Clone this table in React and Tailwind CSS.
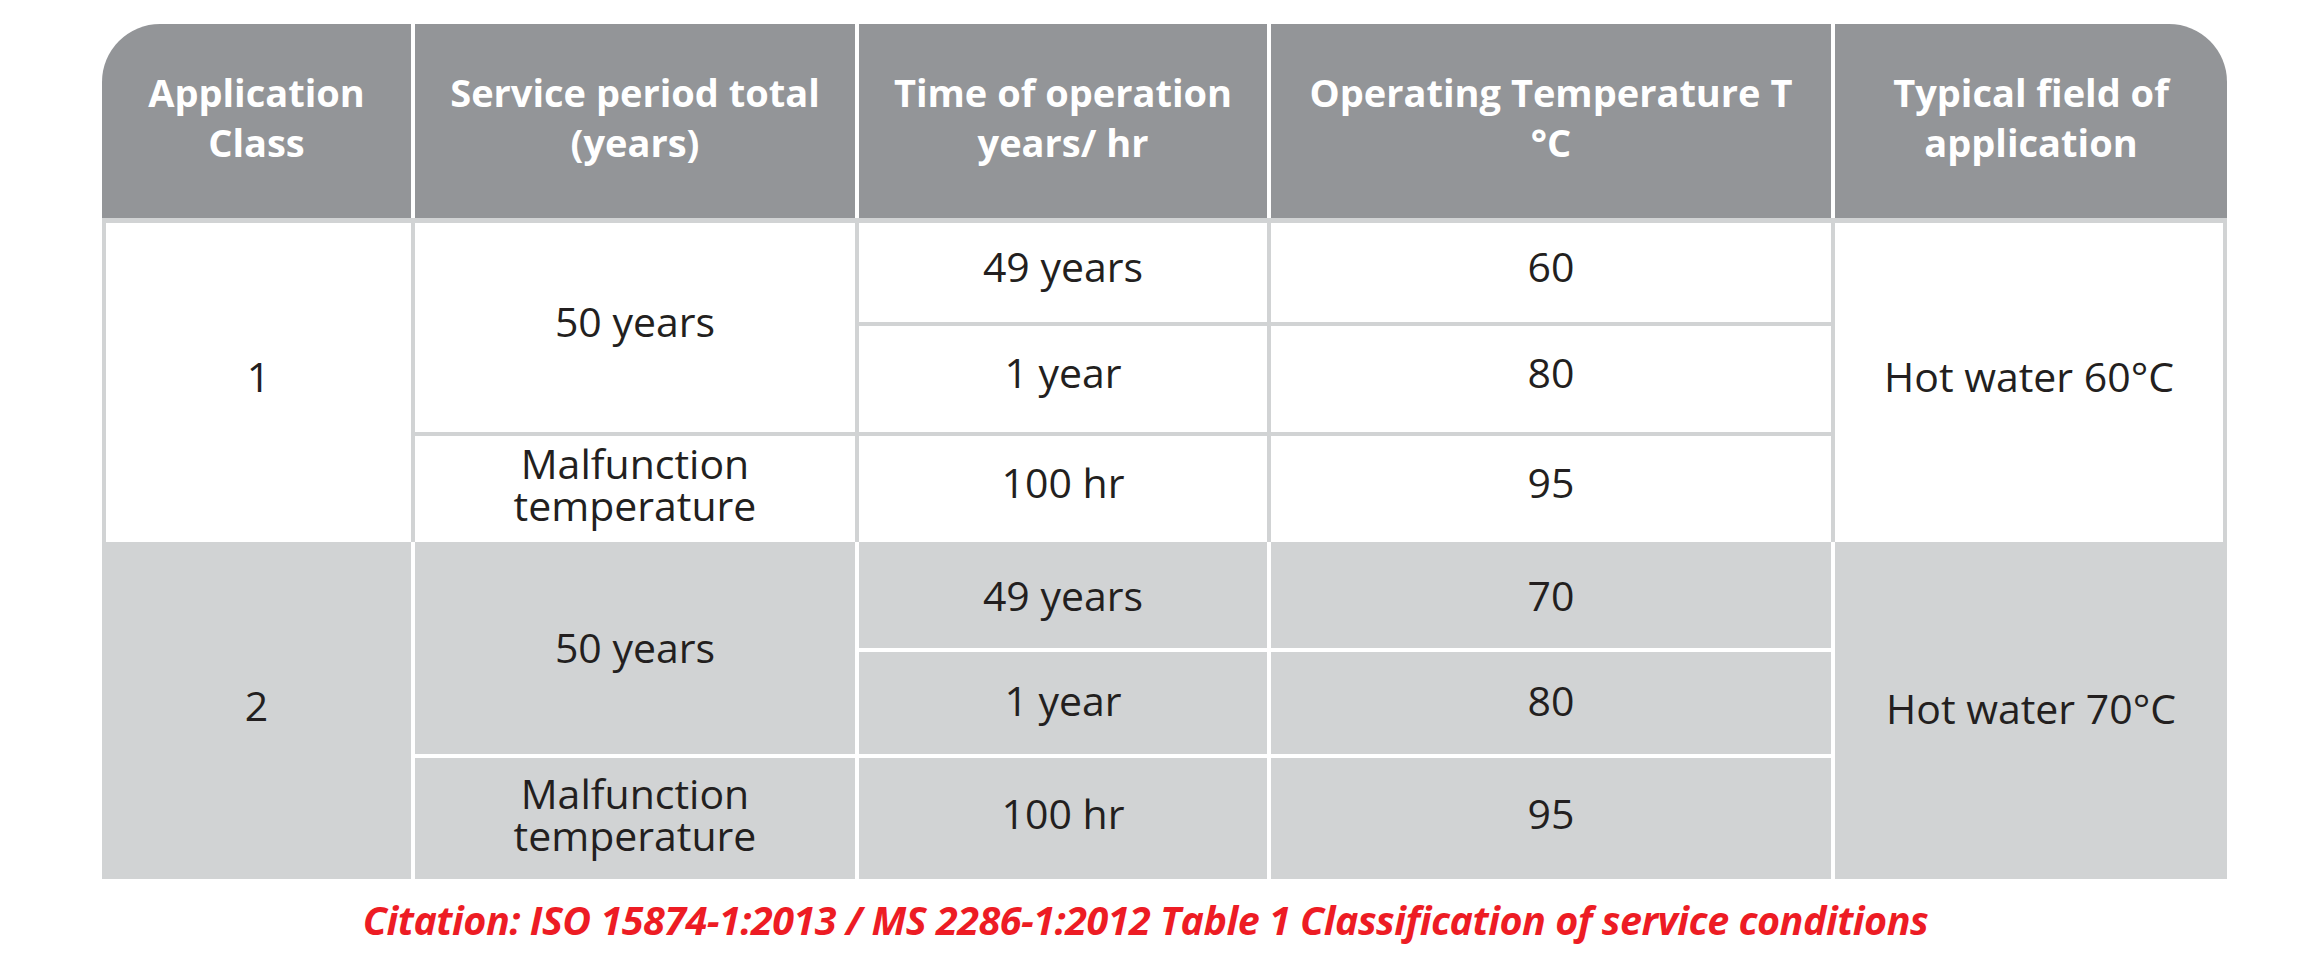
import React from "react";

const F = "font-['Open_Sans','Noto_Sans',sans-serif]";

function H({ children, className = "" }) {
  return (
    <div className={`flex items-center justify-center bg-[#939598] text-white font-bold text-[38px] leading-[50px] text-center pb-[8px] ${className}`}>
      <div>{children}</div>
    </div>
  );
}

function C({ children, className = "", bg, pb = "pb-[14px]" }) {
  return (
    <div className={`flex items-center justify-center text-center text-[#231f20] text-[41px] leading-[42px] ${pb} ${bg} ${className}`}>
      <div>{children}</div>
    </div>
  );
}

function Group({ cls, rows, data, cellBg, lineBg, pad, p }) {
  return (
    <div className={`grid ${cls} ${rows} gap-x-[4px] gap-y-[4px] ${lineBg} ${pad}`}>
      <C bg={cellBg} pb={p.cls} className="row-span-3">{data.cls}</C>
      <C bg={cellBg} pb={p.y50} className="row-span-2">50 years</C>
      <C bg={cellBg} pb={p.r1}>49 years</C>
      <C bg={cellBg} pb={p.r1}>{data.t1}</C>
      <C bg={cellBg} pb={p.field} className="row-span-3">{data.field}</C>
      <C bg={cellBg} pb={p.r2}>1 year</C>
      <C bg={cellBg} pb={p.r2}>80</C>
      <C bg={cellBg} pb={p.mal}>Malfunction<br />temperature</C>
      <C bg={cellBg} pb={p.r3}>100 hr</C>
      <C bg={cellBg} pb={p.r3}>95</C>
    </div>
  );
}

export default function App() {
  return (
    <div className={`w-[2322px] h-[966px] bg-white ${F} pt-[24px] pl-[102px]`}>
      <div className="w-[2125px] flex flex-col">
        <div className="grid grid-cols-[309px_440px_408px_560px_392px] gap-x-[4px] h-[194px] bg-white">
          <H className="rounded-tl-[58px]">Application<br />Class</H>
          <H>Service period total<br />(years)</H>
          <H>Time of operation<br />years/ hr</H>
          <H>Operating Temperature T<br />°C</H>
          <H className="rounded-tr-[58px]">Typical field of<br />application</H>
        </div>
        <div className="h-[5px] bg-[#d1d3d4]" />
        <Group
          cls="grid-cols-[305px_440px_408px_560px_388px]"
          rows="grid-rows-[99px_106px_106px]"
          lineBg="bg-[#d1d3d4]"
          cellBg="bg-white"
          pad="px-[4px]"
          data={{ cls: "1", t1: "60", field: "Hot water 60°C" }}
          p={{ cls: "pb-[14px]", y50: "pb-[14px]", r1: "pb-[14px]", field: "pb-[14px]", r2: "pb-[14px]", mal: "pb-[10px]", r3: "pb-[14px]" }}
        />
        <Group
          cls="grid-cols-[309px_440px_408px_560px_392px]"
          rows="grid-rows-[106px_102px_121px]"
          lineBg="bg-white"
          cellBg="bg-[#d1d3d4]"
          pad=""
          data={{ cls: "2", t1: "70", field: "Hot water 70°C" }}
          p={{ cls: "pb-[11px]", y50: "pb-[2px]", r1: "pb-[1px]", field: "pb-[6px]", r2: "pb-[6px]", mal: "pb-[10px]", r3: "pb-[12px]" }}
        />
        <div className="flex justify-center pr-[38px] pt-[21px]">
          <div className="text-[#ed1c24] font-bold italic text-[39.5px] leading-[40px] tracking-[-0.5px] whitespace-nowrap">
            Citation: ISO 15874-1:2013 / MS 2286-1:2012 Table 1 Classification of service conditions
          </div>
        </div>
      </div>
    </div>
  );
}
